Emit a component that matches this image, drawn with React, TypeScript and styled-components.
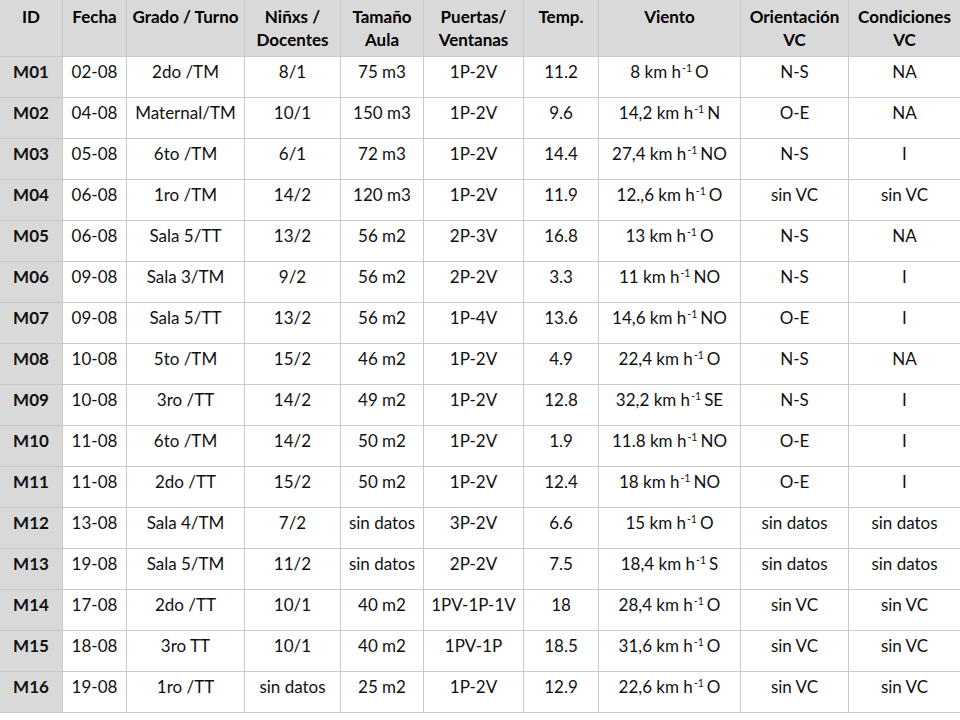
import * as React from 'react';
import styled, { createGlobalStyle, css } from 'styled-components';

const GlobalStyle = createGlobalStyle`
  html, body {
    margin: 0;
    padding: 0;
    background: #ffffff;
  }
  body {
    font-family: Lato, "Liberation Sans", sans-serif;
    color: #000;
  }
`;

const columns = [63, 64, 118, 96, 83, 100, 75, 142, 108, 111];

const Grid = styled.div`
  display: grid;
  grid-template-columns: ${columns.map((c) => `${c}px`).join(' ')};
  grid-auto-rows: 41px;
  grid-template-rows: 57px;
  width: 960px;
  font-size: 17px;
  line-height: 23px;
`;

const cellBase = css`
  box-sizing: border-box;
  border-bottom: 1px solid #c9c9c9;
  border-right: 1px solid #c9c9c9;
  text-align: center;
  white-space: nowrap;
  overflow: hidden;

  &:nth-child(10n) {
    border-right: 0;
  }
`;

const HeadCell = styled.div`
  ${cellBase}
  background: #d9d9d9;
  font-weight: 700;
  padding-top: 5px;
`;

const Cell = styled.div<{ $shade?: boolean }>`
  ${cellBase}
  padding-top: 3px;
  background: ${(p) => (p.$shade ? '#d9d9d9' : '#ffffff')};
  font-weight: ${(p) => (p.$shade ? 700 : 400)};
  color: #111;
`;

const Sup = styled.sup`
  font-size: 0.62em;
  line-height: 0;
  vertical-align: 0.55em;
  margin-left: 1px;
  margin-right: 3px;
`;

const headers: React.ReactNode[] = [
  'ID',
  'Fecha',
  'Grado / Turno',
  <>Niñxs /<br />Docentes</>,
  <>Tamaño<br />Aula</>,
  <>Puertas/<br />Ventanas</>,
  'Temp.',
  'Viento',
  <>Orientación<br />VC</>,
  <>Condiciones<br />VC</>,
];

type Row = [string, string, string, string, string, string, string, string, string, string, string];

const rows: Row[] = [
  ['M01', '02-08', '2do /TM', '8/1', '75 m3', '1P-2V', '11.2', '8', 'O', 'N-S', 'NA'],
  ['M02', '04-08', 'Maternal/TM', '10/1', '150 m3', '1P-2V', '9.6', '14,2', 'N', 'O-E', 'NA'],
  ['M03', '05-08', '6to /TM', '6/1', '72 m3', '1P-2V', '14.4', '27,4', 'NO', 'N-S', 'I'],
  ['M04', '06-08', '1ro /TM', '14/2', '120 m3', '1P-2V', '11.9', '12.,6', 'O', 'sin VC', 'sin VC'],
  ['M05', '06-08', 'Sala 5/TT', '13/2', '56 m2', '2P-3V', '16.8', '13', 'O', 'N-S', 'NA'],
  ['M06', '09-08', 'Sala 3/TM', '9/2', '56 m2', '2P-2V', '3.3', '11', 'NO', 'N-S', 'I'],
  ['M07', '09-08', 'Sala 5/TT', '13/2', '56 m2', '1P-4V', '13.6', '14,6', 'NO', 'O-E', 'I'],
  ['M08', '10-08', '5to /TM', '15/2', '46 m2', '1P-2V', '4.9', '22,4', 'O', 'N-S', 'NA'],
  ['M09', '10-08', '3ro /TT', '14/2', '49 m2', '1P-2V', '12.8', '32,2', 'SE', 'N-S', 'I'],
  ['M10', '11-08', '6to /TM', '14/2', '50 m2', '1P-2V', '1.9', '11.8', 'NO', 'O-E', 'I'],
  ['M11', '11-08', '2do /TT', '15/2', '50 m2', '1P-2V', '12.4', '18', 'NO', 'O-E', 'I'],
  ['M12', '13-08', 'Sala 4/TM', '7/2', 'sin datos', '3P-2V', '6.6', '15', 'O', 'sin datos', 'sin datos'],
  ['M13', '19-08', 'Sala 5/TM', '11/2', 'sin datos', '2P-2V', '7.5', '18,4', 'S', 'sin datos', 'sin datos'],
  ['M14', '17-08', '2do /TT', '10/1', '40 m2', '1PV-1P-1V', '18', '28,4', 'O', 'sin VC', 'sin VC'],
  ['M15', '18-08', '3ro TT', '10/1', '40 m2', '1PV-1P', '18.5', '31,6', 'O', 'sin VC', 'sin VC'],
  ['M16', '19-08', '1ro /TT', 'sin datos', '25 m2', '1P-2V', '12.9', '22,6', 'O', 'sin VC', 'sin VC'],
];

const Wind = ({ speed, dir }: { speed: string; dir: string }) => (
  <>
    {speed} km h<Sup>-1</Sup>{dir}
  </>
);

export default function App() {
  return (
    <>
      <GlobalStyle />
      <Grid>
        {headers.map((h, i) => (
          <HeadCell key={`h${i}`}>{h}</HeadCell>
        ))}
        {rows.map((r) => {
          const [id, fecha, grado, ninxs, aula, puertas, temp, speed, dir, orient, cond] = r;
          return (
            <React.Fragment key={id}>
              <Cell $shade>{id}</Cell>
              <Cell>{fecha}</Cell>
              <Cell>{grado}</Cell>
              <Cell>{ninxs}</Cell>
              <Cell>{aula}</Cell>
              <Cell>{puertas}</Cell>
              <Cell>{temp}</Cell>
              <Cell>
                <Wind speed={speed} dir={dir} />
              </Cell>
              <Cell>{orient}</Cell>
              <Cell>{cond}</Cell>
            </React.Fragment>
          );
        })}
      </Grid>
    </>
  );
}
